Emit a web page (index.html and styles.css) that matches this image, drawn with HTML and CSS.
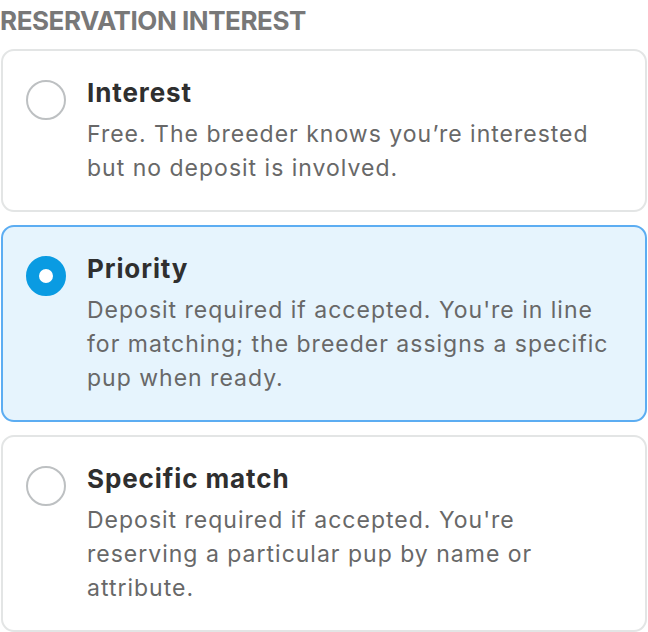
FILE: index.html
```html
<!DOCTYPE html>
<html lang="en">
<head>
<meta charset="utf-8">
<title>Reservation interest</title>
<link rel="stylesheet" href="styles.css">
</head>
<body>
<section class="group">
  <h2 class="group-label">RESERVATION INTEREST</h2>
  <div class="options">
    <label class="option">
      <span class="radio"></span>
      <span class="option-text">
        <span class="option-title">Interest</span>
        <span class="option-desc">Free. The breeder knows you’re interested but no deposit is involved.</span>
      </span>
    </label>
    <label class="option is-selected">
      <span class="radio"></span>
      <span class="option-text">
        <span class="option-title">Priority</span>
        <span class="option-desc">Deposit required if accepted. You're in line for matching; the breeder assigns a specific pup when ready.</span>
      </span>
    </label>
    <label class="option">
      <span class="radio"></span>
      <span class="option-text">
        <span class="option-title">Specific match</span>
        <span class="option-desc">Deposit required if accepted. You're reserving a particular pup by name or attribute.</span>
      </span>
    </label>
  </div>
</section>
</body>
</html>
```

FILE: styles.css
```css
* { box-sizing: border-box; }
html, body { margin: 0; padding: 0; background: #ffffff; }
body {
  font-family: Inter, "Noto Sans", "Liberation Sans", sans-serif;
  width: 648px;
}
.group-label {
  margin: 0;
  padding: 4px 0 0 0;
  height: 49px;
  font-size: 26px;
  line-height: 34px;
  font-weight: 700;
  color: #787878;
  letter-spacing: -0.45px;
}
.options {
  display: flex;
  flex-direction: column;
  gap: 13px;
  padding: 0 1px;
}
.option {
  display: flex;
  align-items: flex-start;
  gap: 21px;
  border: 2px solid #e3e5e5;
  border-radius: 13px;
  padding: 25px 30px 25px 23px;
  background: #ffffff;
}
.option.is-selected {
  border-color: #5cadf2;
  background: #e6f4fd;
}
.radio {
  flex: none;
  width: 40px;
  height: 40px;
  margin-top: 4px;
  border-radius: 50%;
  border: 2px solid #bdc0c2;
  background: #ffffff;
}
.is-selected .radio {
  border: 13px solid #0a9be2;
  background: #ffffff;
}
.option-text {
  flex: 1;
  display: flex;
  flex-direction: column;
}
.option-title {
  font-size: 26px;
  line-height: 34px;
  font-weight: 700;
  color: #2f2f2f;
  letter-spacing: 0.9px;
}
.option-desc {
  margin-top: 7px;
  font-size: 23px;
  line-height: 34px;
  color: #686868;
  letter-spacing: 1px;
}
```
